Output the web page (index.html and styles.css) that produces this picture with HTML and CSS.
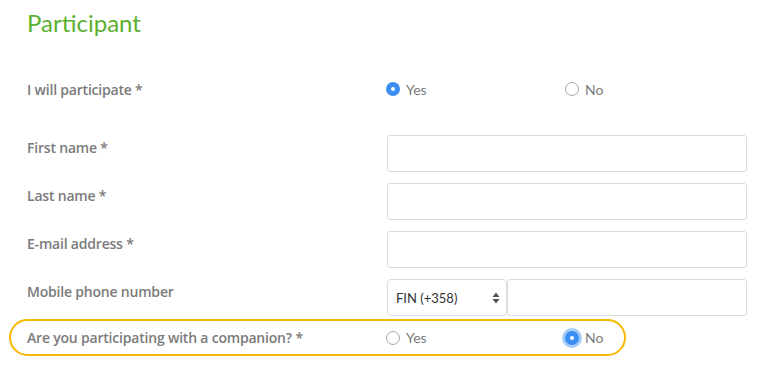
FILE: index.html
```html
<!DOCTYPE html>
<html lang="en">
<head>
    <meta charset="UTF-8">
    <meta name="viewport" content="width=device-width, initial-scale=1.0">
    <title>Participant</title>
    <link rel="stylesheet" href="styles.css">
</head>
<body>
    <div class="form">
        <h1>Participant</h1>

        <div class="row choice">
            <div class="label">I will participate *</div>
            <div class="options">
                <label class="option"><span class="radio checked"></span>Yes</label>
                <label class="option"><span class="radio"></span>No</label>
            </div>
        </div>

        <div class="fields">
            <div class="row field">
                <div class="label">First name *</div>
                <input type="text" class="input">
            </div>
            <div class="row field">
                <div class="label">Last name *</div>
                <input type="text" class="input">
            </div>
            <div class="row field">
                <div class="label">E-mail address *</div>
                <input type="text" class="input">
            </div>
            <div class="row field">
                <div class="label">Mobile phone number</div>
                <div class="phone">
                    <div class="select">
                        <span>FIN (+358)</span>
                        <svg width="8" height="12" viewBox="0 0 8 12">
                            <path d="M4 0.5 L7.5 5 L0.5 5 Z" fill="#555"/>
                            <path d="M4 11.5 L7.5 7 L0.5 7 Z" fill="#555"/>
                        </svg>
                    </div>
                    <input type="text" class="input">
                </div>
            </div>
        </div>

        <div class="row choice highlight">
            <div class="label">Are you participating with a companion? *</div>
            <div class="options">
                <label class="option"><span class="radio"></span>Yes</label>
                <label class="option"><span class="radio checked focus"></span>No</label>
            </div>
        </div>
    </div>
</body>
</html>
```

FILE: styles.css
```css
* {
    margin: 0;
    padding: 0;
    box-sizing: border-box;
}

body {
    font-family: 'Lato', sans-serif;
    color: #7b7b7b;
    background: #fff;
}

.form {
    width: 764px;
    padding: 8px 17px 0 27px;
}

h1 {
    font-size: 24px;
    font-weight: 400;
    color: #5cb030;
    line-height: 30px;
    margin-bottom: 35px;
}

.row {
    display: grid;
    grid-template-columns: 360px 360px;
}

.label {
    font-family: 'Open Sans', sans-serif;
    font-size: 14px;
    font-weight: 600;
    color: #7b7b7b;
    letter-spacing: -0.2px;
}

.choice {
    align-items: center;
    height: 32px;
}

.options {
    display: flex;
}

.option {
    width: 180px;
    flex-shrink: 0;
    display: flex;
    align-items: center;
    font-size: 14px;
    color: #7b7b7b;
    margin-left: -1px;
}

.option:last-child {
    width: auto;
}

.radio {
    width: 14px;
    height: 14px;
    border-radius: 50%;
    border: 1px solid #a9a9a9;
    background: #fff;
    margin-right: 6px;
    position: relative;
}

.radio.checked {
    border: none;
    background: #3a8ef0;
}

.radio.checked::after {
    content: "";
    position: absolute;
    left: 5px;
    top: 5px;
    width: 4px;
    height: 4px;
    border-radius: 50%;
    background: #fff;
}

.radio.focus {
    box-shadow: 0 0 0 3px rgba(90, 160, 245, 0.55);
}

.fields {
    margin-top: 30px;
}

.field {
    height: 37px;
    margin-bottom: 11px;
}

.field .label {
    padding-top: 3px;
}

.input {
    width: 360px;
    height: 37px;
    border: 1px solid #dcdcdc;
    border-radius: 3px;
    background: #fff;
    outline: none;
}

.phone {
    display: flex;
}

.phone .input {
    width: 240px;
}

.select {
    width: 120px;
    height: 37px;
    border: 1px solid #dcdcdc;
    border-radius: 4px;
    display: flex;
    align-items: center;
    justify-content: space-between;
    padding: 0 6px 0 8px;
    font-size: 13px;
    color: #333;
}

.highlight {
    margin-left: -18px;
    margin-top: -8px;
    padding-left: 16px;
    width: 617px;
    height: 37px;
    border: 2.5px solid #f8b800;
    border-radius: 19px;
    grid-template-columns: 360px 240px;
}
```
